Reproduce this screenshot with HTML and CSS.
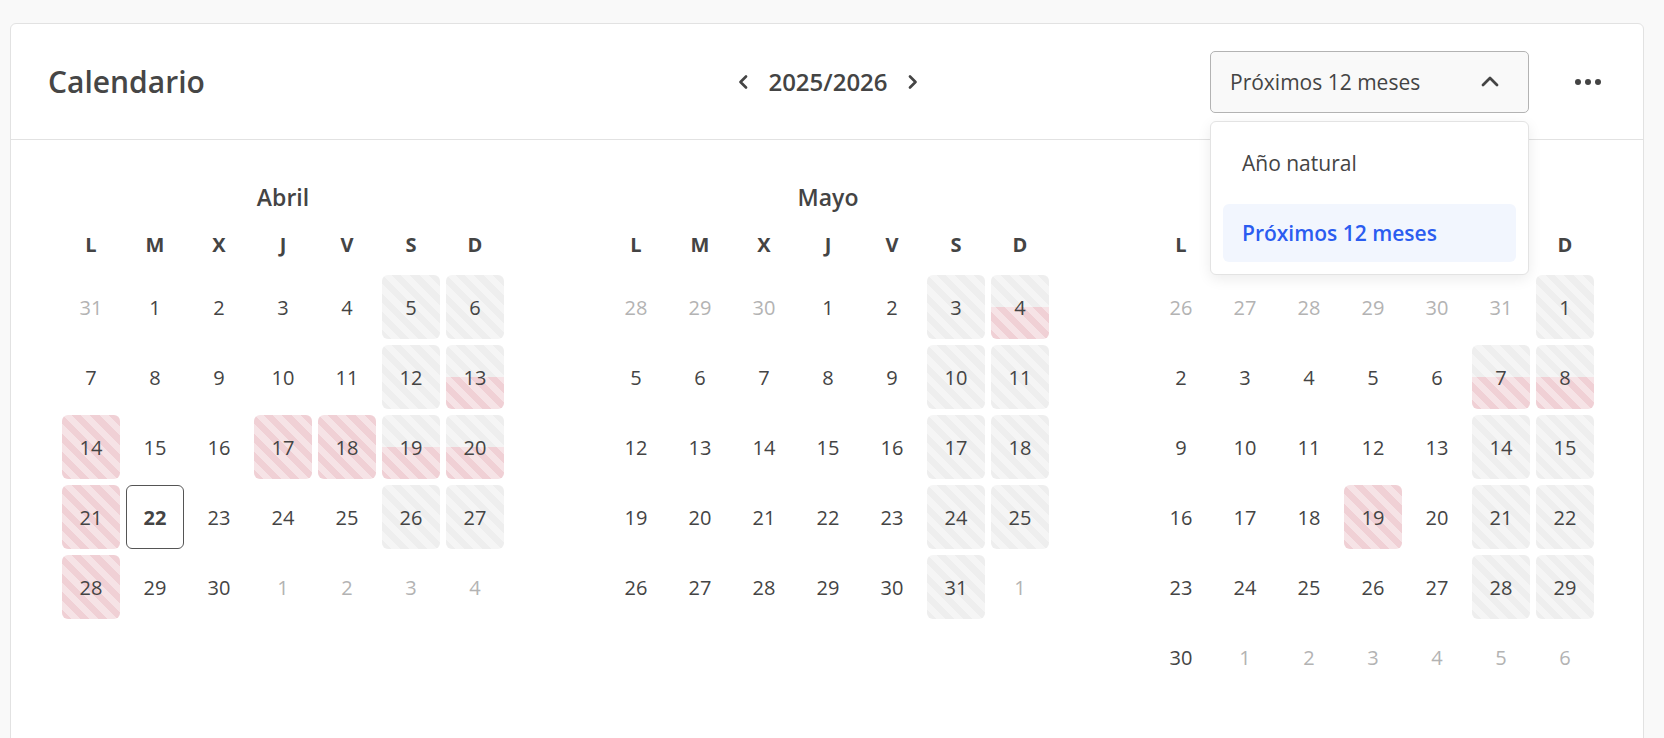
FILE: index.html
```html
<!DOCTYPE html>
<html lang="es">
<head>
<meta charset="utf-8">
<title>Calendario</title>
<link rel="stylesheet" href="styles.css">
</head>
<body>
<div class="page">
  <section class="card">
    <header class="header">
      <h1 class="title">Calendario</h1>
      <div class="year-nav">
        <svg class="chev" width="10" height="14" viewBox="0 0 10 14"><path d="M8 1.5 L2.5 7 L8 12.5" fill="none" stroke="#444" stroke-width="2.6" stroke-linecap="round" stroke-linejoin="round"/></svg>
        <span class="year">2025/2026</span>
        <svg class="chev" width="10" height="14" viewBox="0 0 10 14"><path d="M2 1.5 L7.5 7 L2 12.5" fill="none" stroke="#444" stroke-width="2.6" stroke-linecap="round" stroke-linejoin="round"/></svg>
      </div>
      <div class="right">
        <div class="select">
          <div class="select-btn">
            <span>Próximos 12 meses</span>
            <svg width="18" height="11" viewBox="0 0 18 11"><path d="M2 9 L9 2 L16 9" fill="none" stroke="#444" stroke-width="2.8" stroke-linecap="round" stroke-linejoin="round"/></svg>
          </div>
          <div class="menu">
            <div class="menu-item">Año natural</div>
            <div class="menu-item active">Próximos 12 meses</div>
          </div>
        </div>
        <div class="dots"><i></i><i></i><i></i></div>
      </div>
    </header>

    <div class="months">
      <div class="month">
        <h2 class="month-title">Abril</h2>
        <div class="weekdays"><span>L</span><span>M</span><span>X</span><span>J</span><span>V</span><span>S</span><span>D</span></div>
        <div class="days">
          <span class="day out">31</span><span class="day">1</span><span class="day">2</span><span class="day">3</span><span class="day">4</span><span class="day we">5</span><span class="day we">6</span>
          <span class="day">7</span><span class="day">8</span><span class="day">9</span><span class="day">10</span><span class="day">11</span><span class="day we">12</span><span class="day half">13</span>
          <span class="day hol">14</span><span class="day">15</span><span class="day">16</span><span class="day hol">17</span><span class="day hol">18</span><span class="day half">19</span><span class="day half">20</span>
          <span class="day hol">21</span><span class="day today">22</span><span class="day">23</span><span class="day">24</span><span class="day">25</span><span class="day we">26</span><span class="day we">27</span>
          <span class="day hol">28</span><span class="day">29</span><span class="day">30</span><span class="day out">1</span><span class="day out">2</span><span class="day out">3</span><span class="day out">4</span>
        </div>
      </div>

      <div class="month">
        <h2 class="month-title">Mayo</h2>
        <div class="weekdays"><span>L</span><span>M</span><span>X</span><span>J</span><span>V</span><span>S</span><span>D</span></div>
        <div class="days">
          <span class="day out">28</span><span class="day out">29</span><span class="day out">30</span><span class="day">1</span><span class="day">2</span><span class="day we">3</span><span class="day half">4</span>
          <span class="day">5</span><span class="day">6</span><span class="day">7</span><span class="day">8</span><span class="day">9</span><span class="day we">10</span><span class="day we">11</span>
          <span class="day">12</span><span class="day">13</span><span class="day">14</span><span class="day">15</span><span class="day">16</span><span class="day we">17</span><span class="day we">18</span>
          <span class="day">19</span><span class="day">20</span><span class="day">21</span><span class="day">22</span><span class="day">23</span><span class="day we">24</span><span class="day we">25</span>
          <span class="day">26</span><span class="day">27</span><span class="day">28</span><span class="day">29</span><span class="day">30</span><span class="day we">31</span><span class="day out">1</span>
        </div>
      </div>

      <div class="month">
        <h2 class="month-title">Junio</h2>
        <div class="weekdays"><span>L</span><span>M</span><span>X</span><span>J</span><span>V</span><span>S</span><span>D</span></div>
        <div class="days">
          <span class="day out">26</span><span class="day out">27</span><span class="day out">28</span><span class="day out">29</span><span class="day out">30</span><span class="day out">31</span><span class="day we">1</span>
          <span class="day">2</span><span class="day">3</span><span class="day">4</span><span class="day">5</span><span class="day">6</span><span class="day half">7</span><span class="day half">8</span>
          <span class="day">9</span><span class="day">10</span><span class="day">11</span><span class="day">12</span><span class="day">13</span><span class="day we">14</span><span class="day we">15</span>
          <span class="day">16</span><span class="day">17</span><span class="day">18</span><span class="day hol">19</span><span class="day">20</span><span class="day we">21</span><span class="day we">22</span>
          <span class="day">23</span><span class="day">24</span><span class="day">25</span><span class="day">26</span><span class="day">27</span><span class="day we">28</span><span class="day we">29</span>
          <span class="day">30</span><span class="day out">1</span><span class="day out">2</span><span class="day out">3</span><span class="day out">4</span><span class="day out">5</span><span class="day out">6</span>
        </div>
      </div>
    </div>
  </section>
</div>
</body>
</html>
```

FILE: styles.css
```css
html, body {
  margin: 0;
  height: 738px;
  overflow: hidden;
}
body {
  background: #f9f9f9;
  font-family: "Open Sans", "Noto Sans", sans-serif;
  color: #444;
}
.page {
  padding: 23px 20px 0 10px;
}
.card {
  background: #fff;
  border: 1px solid #e2e2e2;
  border-radius: 6px;
  height: 780px;
}
.header {
  display: grid;
  grid-template-columns: 1fr auto 1fr;
  align-items: center;
  height: 115px;
  border-bottom: 1px solid #e2e2e2;
  padding: 0 42px 0 37px;
}
.title {
  margin: 0;
  font-size: 30px;
  font-weight: 600;
  color: #464646;
}
.year-nav {
  display: flex;
  align-items: center;
  gap: 20px;
  padding-left: 7px;
}
.chev { display: block; }
.year {
  font-size: 24px;
  font-weight: 600;
  color: #444;
}
.right {
  justify-self: end;
  display: flex;
  align-items: center;
  gap: 46px;
}
.select {
  position: relative;
}
.select-btn {
  width: 319px;
  height: 62px;
  box-sizing: border-box;
  border: 1px solid #b3b3b3;
  border-radius: 5px;
  background: #f9f9f9;
  display: flex;
  align-items: center;
  justify-content: space-between;
  padding: 0 29px 0 19px;
  font-size: 21px;
  color: #444;
}
.select-btn svg { display: block; }
.menu {
  position: absolute;
  top: calc(100% + 8px);
  left: 0;
  width: 319px;
  box-sizing: border-box;
  background: #fff;
  border: 1px solid #e3e3e3;
  border-radius: 6px;
  box-shadow: 0 4px 14px rgba(0, 0, 0, 0.08);
  padding: 12px;
  display: flex;
  flex-direction: column;
  gap: 12px;
  z-index: 10;
}
.menu-item {
  height: 58px;
  display: flex;
  align-items: center;
  padding-left: 19px;
  font-size: 21px;
  border-radius: 6px;
  color: #444;
}
.menu-item.active {
  background: #f2f6fe;
  color: #2b5cf0;
  font-weight: 600;
}
.dots {
  display: flex;
  gap: 4px;
}
.dots i {
  width: 6px;
  height: 6px;
  border-radius: 50%;
  background: #444;
}
.months {
  display: grid;
  grid-template-columns: repeat(3, 442px);
  column-gap: 103px;
  padding: 41px 0 0 51px;
}
.month-title {
  margin: 0 0 18px;
  text-align: center;
  font-size: 23px;
  font-weight: 600;
  line-height: 32px;
  color: #444;
}
.weekdays {
  display: grid;
  grid-template-columns: repeat(7, 58px);
  column-gap: 6px;
  font-size: 20px;
  font-weight: 700;
  line-height: 28px;
  text-align: center;
  margin-bottom: 16px;
}
.days {
  display: grid;
  grid-template-columns: repeat(7, 58px);
  grid-auto-rows: 64px;
  gap: 6px;
}
.day {
  display: flex;
  align-items: center;
  justify-content: center;
  font-size: 20px;
  border-radius: 6px;
  color: #444;
  box-sizing: border-box;
}
.day.out { color: #b3b3b3; }
.day.we {
  background: repeating-linear-gradient(45deg, #eeeeee 0 6.5px, #f5f5f5 6.5px 13px);
}
.day.hol {
  background: repeating-linear-gradient(45deg, #f0d0d5 0 6.5px, #f6e3e6 6.5px 13px);
}
.day.half {
  background:
    repeating-linear-gradient(45deg, #f0d0d5 0 6.5px, #f6e3e6 6.5px 13px) left bottom / 100% 50% no-repeat,
    repeating-linear-gradient(45deg, #eeeeee 0 6.5px, #f5f5f5 6.5px 13px);
}
.day.today {
  border: 1px solid #555;
  font-weight: 700;
}
```
